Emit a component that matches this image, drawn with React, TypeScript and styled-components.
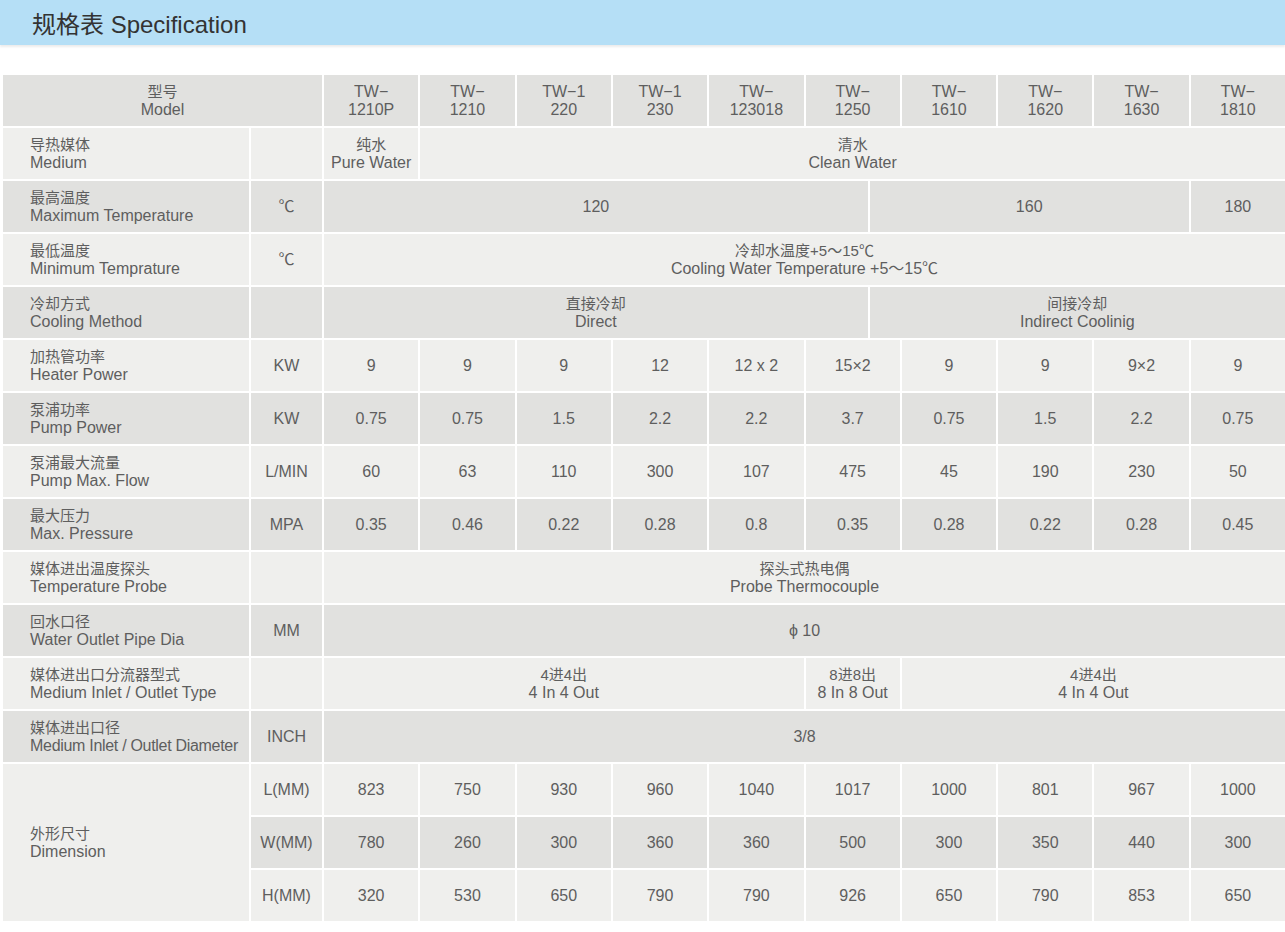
import React from "react";
import styled, { createGlobalStyle } from "styled-components";

const Global = createGlobalStyle`
  body { margin: 0; background: #fff; font-family: "Liberation Sans", Arial, "Noto Sans CJK SC", sans-serif; }
`;

const Header = styled.div`
  height: 45px;
  background: #b5dff6;
  box-shadow: 0 2px 2px rgba(0,0,0,0.08);
  display: flex;
  align-items: center;
  padding-left: 32px;
  font-size: 24px;
  color: #333;
`;

const Grid = styled.div`
  margin: 30px 0 0 3px;
  width: 1282px;
  display: grid;
  grid-template-columns: 246px 71px repeat(30, 1fr);
  grid-auto-rows: 51px;
  gap: 2px;
  background: #fff;
`;

const Cell = styled.div<{ $dark?: boolean; $left?: boolean; $c: string; $r?: string }>`
  grid-column: ${(p) => p.$c};
  ${(p) => (p.$r ? `grid-row: ${p.$r};` : "")}
  background: ${(p) => (p.$dark ? "#e1e1df" : "#efefed")};
  color: #5e5e5e;
  font-size: 16px;
  line-height: 18px;
  display: flex;
  flex-direction: column;
  justify-content: center;
  align-items: ${(p) => (p.$left ? "flex-start" : "center")};
  text-align: ${(p) => (p.$left ? "left" : "center")};
  padding-left: ${(p) => (p.$left ? "27px" : "0")};
  white-space: nowrap;
`;

const Zh = styled.span`
  font-size: 15px;
`;

const two = (a: string, b?: string) => (
  <>
    <Zh>{a}</Zh>
    {b !== undefined && <span>{b}</span>}
  </>
);

export default function App() {
  const models = ["TW−|1210P", "TW−|1210", "TW−1|220", "TW−1|230", "TW−|123018", "TW−|1250", "TW−|1610", "TW−|1620", "TW−|1630", "TW−|1810"];
  let r = 1;
  const out: React.ReactNode[] = [];
  const label = (row: number, dark: boolean, zh: string, en: string, unit: string) => {
    out.push(
      <Cell key={`l${row}`} $dark={dark} $left $c="1 / span 1" $r={`${row}`}>
        <Zh>{zh}</Zh>
        <span>{en}</span>
      </Cell>,
      <Cell key={`u${row}`} $dark={dark} $c="2 / span 1" $r={`${row}`}>
        {unit}
      </Cell>
    );
  };
  const span = (row: number, dark: boolean, start: number, n: number, content: React.ReactNode, k: string) => {
    out.push(
      <Cell key={k} $dark={dark} $c={`${3 + start} / span ${n}`} $r={`${row}`}>
        {content}
      </Cell>
    );
  };
  out.push(
    <Cell key="h" $dark $c="1 / span 2" $r="1">
      <Zh>型号</Zh>
      <span>Model</span>
    </Cell>
  );
  models.forEach((m, i) => {
    const [a, b] = m.split("|");
    span(1, true, i * 3, 3, <><span>{a}</span><span>{b}</span></>, `m${i}`);
  });
  r = 2;
  label(r, false, "导热媒体", "Medium", "");
  span(r, false, 0, 3, two("纯水", "Pure Water"), "md1");
  span(r, false, 3, 27, two("清水", "Clean Water"), "md2");
  r = 3;
  label(r, true, "最高温度", "Maximum Temperature", "℃");
  span(r, true, 0, 17, "120", "t1");
  span(r, true, 17, 10, "160", "t2");
  span(r, true, 27, 3, "180", "t3");
  r = 4;
  label(r, false, "最低温度", "Minimum Temprature", "℃");
  span(r, false, 0, 30, two("冷却水温度+5～15℃", "Cooling Water Temperature +5～15℃"), "mn");
  r = 5;
  label(r, true, "冷却方式", "Cooling Method", "");
  span(r, true, 0, 17, two("直接冷却", "Direct"), "c1");
  span(r, true, 17, 13, two("间接冷却", "Indirect Coolinig"), "c2");
  const valueRows: [string, string, string, string[]][] = [
    ["加热管功率", "Heater Power", "KW", ["9", "9", "9", "12", "12 x 2", "15×2", "9", "9", "9×2", "9"]],
    ["泵浦功率", "Pump Power", "KW", ["0.75", "0.75", "1.5", "2.2", "2.2", "3.7", "0.75", "1.5", "2.2", "0.75"]],
    ["泵浦最大流量", "Pump Max. Flow", "L/MIN", ["60", "63", "110", "300", "107", "475", "45", "190", "230", "50"]],
    ["最大压力", "Max. Pressure", "MPA", ["0.35", "0.46", "0.22", "0.28", "0.8", "0.35", "0.28", "0.22", "0.28", "0.45"]],
  ];
  valueRows.forEach(([zh, en, u, vals], k) => {
    const row = 6 + k;
    const dark = row % 2 === 1;
    label(row, dark, zh, en, u);
    vals.forEach((v, i) => span(row, dark, i * 3, 3, v, `v${row}-${i}`));
  });
  r = 10;
  label(r, false, "媒体进出温度探头", "Temperature Probe", "");
  span(r, false, 0, 30, two("探头式热电偶", "Probe Thermocouple"), "pr");
  r = 11;
  label(r, true, "回水口径", "Water Outlet Pipe Dia", "MM");
  span(r, true, 0, 30, "ϕ 10", "od");
  r = 12;
  label(r, false, "媒体进出口分流器型式", "Medium Inlet / Outlet Type", "");
  span(r, false, 0, 15, two("4进4出", "4 In 4 Out"), "it1");
  span(r, false, 15, 3, two("8进8出", "8 In 8 Out"), "it2");
  span(r, false, 18, 12, two("4进4出", "4 In 4 Out"), "it3");
  r = 13;
  out.push(
    <Cell key="ld13" $dark $left $c="1 / span 1" $r="13">
      <Zh>媒体进出口径</Zh>
      <span style={{ letterSpacing: "-0.3px" }}>Medium Inlet / Outlet Diameter</span>
    </Cell>,
    <Cell key="u13" $dark $c="2 / span 1" $r="13">INCH</Cell>
  );
  span(r, true, 0, 30, "3/8", "dia");
  out.push(
    <Cell key="dim" $left $c="1 / span 1" $r="14 / span 3">
      <Zh>外形尺寸</Zh>
      <span>Dimension</span>
    </Cell>
  );
  const dims: [string, string[]][] = [
    ["L(MM)", ["823", "750", "930", "960", "1040", "1017", "1000", "801", "967", "1000"]],
    ["W(MM)", ["780", "260", "300", "360", "360", "500", "300", "350", "440", "300"]],
    ["H(MM)", ["320", "530", "650", "790", "790", "926", "650", "790", "853", "650"]],
  ];
  dims.forEach(([u, vals], k) => {
    const row = 14 + k;
    const dark = k === 1;
    out.push(<Cell key={`du${row}`} $dark={dark} $c="2 / span 1" $r={`${row}`}>{u}</Cell>);
    vals.forEach((v, i) => span(row, dark, i * 3, 3, v, `d${row}-${i}`));
  });
  return (
    <>
      <Global />
      <Header>规格表 Specification</Header>
      <Grid>{out}</Grid>
    </>
  );
}
